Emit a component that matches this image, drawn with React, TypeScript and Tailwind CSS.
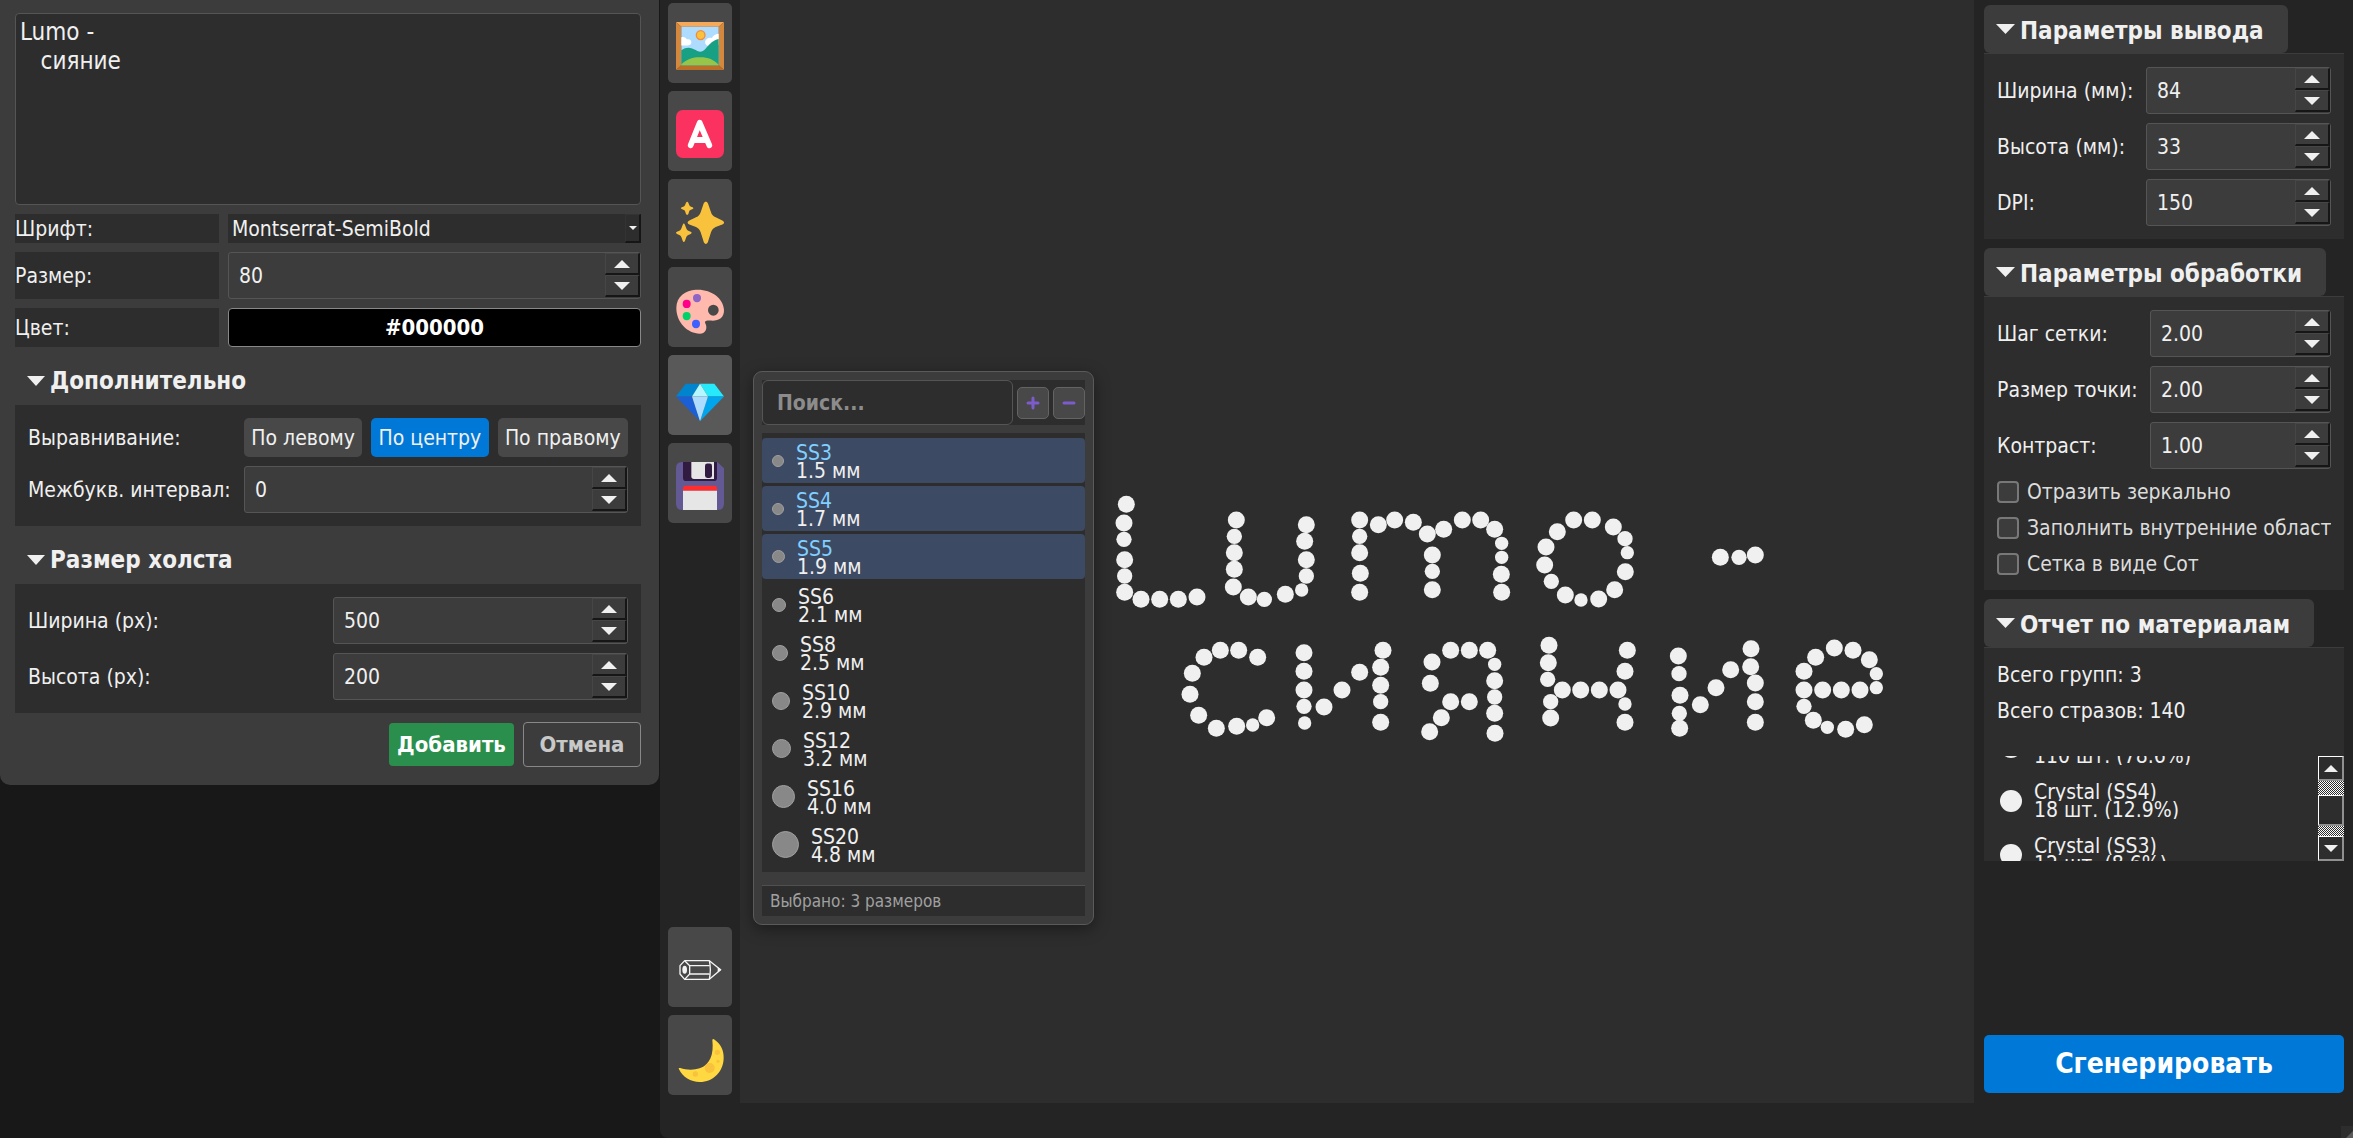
import { useState, type ReactNode } from "react";
import clsx from "clsx";

const B = 25.5;
const M = 23;
const S = 20;

/* Rhinestones of the layout: centre x, centre y, radius */
const STONES: [number, number, number][] = [
  // L
  [109, 73, B], [102, 129, B], [102, 178, M], [104, 239, B], [104, 288, M], [104, 337, B],
  [153, 358, B], [209, 358, B], [265, 358, B], [321, 351, B],
  // u
  [439, 120, B], [433, 169, M], [433, 218, B], [433, 268, B], [430, 321, B], [475, 351, B],
  [523, 358, M], [586, 343, B], [635, 330, S], [649, 288, M], [649, 239, B], [644, 184, B], [649, 134, B],
  // m
  [809, 120, B], [809, 169, M], [809, 218, B], [811, 280, B], [809, 337, B], [865, 134, B],
  [914, 120, B], [970, 127, B], [1012, 162, B], [1061, 148, B], [1117, 120, B], [1172, 120, B],
  [1214, 148, B], [1235, 190, S], [1235, 232, S], [1234, 283, B], [1235, 337, B],
  [1027, 225, B], [1027, 274, M], [1027, 329, B],
  // o
  [1451, 120, B], [1507, 120, B], [1570, 141, B], [1605, 176, M], [1612, 218, S], [1606, 275, B],
  [1574, 329, B], [1526, 357, B], [1473, 360, S], [1426, 345, B], [1384, 304, M], [1364, 255, B],
  [1368, 201, B], [1402, 155, B],
  // dash
  [1891, 232, B], [1947, 232, M], [1996, 225, B],
  // с
  [503, 532, B], [446, 511, B], [391, 511, B], [342, 532, B], [307, 580, B], [300, 643, B],
  [326, 706, B], [379, 745, B], [440, 739, B], [488, 735, S], [530, 713, B],
  // и
  [642, 518, B], [642, 574, B], [642, 630, B], [642, 679, M], [644, 729, S], [702, 681, B],
  [756, 630, B], [809, 577, B], [879, 511, B], [872, 562, B], [872, 616, B], [872, 665, M], [872, 727, B],
  // я
  [1026, 546, B], [1082, 511, B], [1138, 511, B], [1193, 511, B], [1214, 553, S], [1214, 602, B],
  [1214, 651, M], [1214, 700, B], [1215, 760, B], [1021, 610, B], [1082, 665, B], [1138, 665, B],
  [1054, 713, B], [1019, 755, B],
  // н
  [1377, 496, B], [1375, 548, B], [1373, 598, M], [1417, 630, B], [1472, 630, B], [1528, 630, B],
  [1584, 630, B], [1382, 665, M], [1382, 714, B], [1612, 511, B], [1605, 574, B], [1605, 672, S], [1605, 727, B],
  // и
  [1765, 528, B], [1767, 581, M], [1770, 646, B], [1768, 700, M], [1769, 745, B], [1831, 674, B],
  [1878, 623, B], [1922, 569, B], [1983, 506, B], [1982, 560, B], [1996, 609, B], [1996, 665, B], [1996, 727, B],
  // е
  [2142, 574, B], [2177, 532, B], [2233, 504, B], [2289, 511, B], [2338, 539, B], [2359, 581, S],
  [2359, 623, S], [2310, 630, B], [2254, 630, B], [2198, 630, B], [2142, 630, B], [2142, 679, M],
  [2170, 721, B], [2212, 742, S], [2267, 748, B], [2323, 734, B],
];

const SIZES: { name: string; mm: string; d: number; selected?: boolean }[] = [
  { name: "SS3", mm: "1.5 мм", d: 12, selected: true },
  { name: "SS4", mm: "1.7 мм", d: 12, selected: true },
  { name: "SS5", mm: "1.9 мм", d: 13, selected: true },
  { name: "SS6", mm: "2.1 мм", d: 14 },
  { name: "SS8", mm: "2.5 мм", d: 16 },
  { name: "SS10", mm: "2.9 мм", d: 18 },
  { name: "SS12", mm: "3.2 мм", d: 19 },
  { name: "SS16", mm: "4.0 мм", d: 23 },
  { name: "SS20", mm: "4.8 мм", d: 27 },
];

const REPORT = [
  { name: "Crystal (SS5)", count: "110 шт. (78.6%)" },
  { name: "Crystal (SS4)", count: "18 шт. (12.9%)" },
  { name: "Crystal (SS3)", count: "12 шт. (8.6%)" },
];

function Triangle({ up, className }: { up?: boolean; className: string }) {
  return (
    <svg viewBox="0 0 16 8" preserveAspectRatio="none" className={className} fill="#f0f0f0" aria-hidden="true">
      <path d={up ? "M0 8L8 0L16 8Z" : "M0 0L8 8L16 0Z"} />
    </svg>
  );
}

function StepButton({ up, label, onClick }: { up?: boolean; label: string; onClick: () => void }) {
  return (
    <button
      type="button"
      aria-label={label}
      onClick={onClick}
      className="flex flex-1 items-center justify-center border-t border-r-2 border-b-2 border-l border-t-[#464646] border-r-[#161616] border-b-[#161616] border-l-[#464646]"
    >
      <Triangle up={up} className="h-2 w-4" />
    </button>
  );
}

function Spin({ id, value }: { id: string; value: string }) {
  const [v, setV] = useState(value);
  const digits = value.includes(".") ? 2 : 0;
  const step = (n: number) => setV((Number(v) + n).toFixed(digits));
  return (
    <div className="flex h-[47px] min-w-0 rounded-[3px] border border-[#555] bg-[#3c3c3c]">
      <input
        id={id}
        value={v}
        onChange={(e) => setV(e.target.value)}
        className="min-w-0 flex-1 bg-transparent pl-2.5 outline-none"
      />
      <div className="flex w-[35px] shrink-0 flex-col pb-px">
        <StepButton up label="Больше" onClick={() => step(1)} />
        <StepButton label="Меньше" onClick={() => step(-1)} />
      </div>
    </div>
  );
}

function Field({ id, label, value }: { id: string; label: string; value: string }) {
  return (
    <>
      <label htmlFor={id} className="self-center whitespace-nowrap">{label}</label>
      <Spin id={id} value={value} />
    </>
  );
}

function DialogSection({ title, children }: { title: string; children: ReactNode }) {
  return (
    <section>
      <button type="button" className="flex h-[49px] items-center gap-[5px] pl-3 text-2xl font-bold">
        <Triangle className="h-2.5 w-[18px]" />
        {title}
      </button>
      <div className="bg-[#2d2d2d] p-[13px]">{children}</div>
    </section>
  );
}

function PanelSection({ title, children }: { title: string; children: ReactNode }) {
  return (
    <section>
      <button
        type="button"
        className="flex h-12 items-center gap-[5px] rounded-md bg-[#3c3c3c] pr-6 pl-3 text-2xl font-bold whitespace-nowrap"
      >
        <Triangle className="h-2.5 w-[19px]" />
        <span className="pt-[3px]">{title}</span>
      </button>
      <div className="border-t border-[#3c3c3c] bg-[#2d2d2d]">{children}</div>
    </section>
  );
}

function Check({ label }: { label: string }) {
  return (
    <label className="flex h-[27px] items-center gap-2 overflow-hidden whitespace-nowrap text-[#dcdcdc]">
      <input
        type="checkbox"
        className="size-[22px] shrink-0 appearance-none rounded-[4px] border-2 border-[#787878] bg-[#3c3c3c] checked:bg-[#0078d7]"
      />
      {label}
    </label>
  );
}

function Tool({ label, box, active, children }: {
  label: string; box: string; active?: boolean; children: ReactNode;
}) {
  return (
    <button
      type="button"
      aria-label={label}
      className={clsx(
        "flex h-20 items-center justify-center rounded-[5px] pt-1.5",
        active ? "bg-[#595959]" : "bg-[#484848]",
      )}
    >
      <svg viewBox={box} preserveAspectRatio="none" className="size-12 overflow-visible" aria-hidden="true">
        {children}
      </svg>
    </button>
  );
}

function Toolbar() {
  return (
    <nav className="flex w-20 shrink-0 flex-col gap-2 px-2 pt-[3px] pb-2">
      <Tool label="Изображение" box="78 64 144 139">
        <path d="M78 64H222L206 78H94Z" fill="#f5a95b" />
        <path d="M78 64L94 78V189L78 203Z" fill="#d3883e" />
        <path d="M222 64L206 78V189L222 203Z" fill="#d3883e" />
        <path d="M78 203L94 189H206L222 203Z" fill="#b96f27" />
        <path d="M94 78H206V189H94Z" fill="#aedcff" />
        <circle cx="152" cy="102" r="13" fill="#f9c23c" stroke="#f58a3c" strokeWidth="4" />
        <path d="M94 108C103 106 109 110 110 114C120 112 125 118 124 124C123 130 118 132 112 132H94Z" fill="#fff" />
        <path d="M206 98C195 99 188 104 186 110C175 107 166 114 165 122C165 129 170 132 176 134L206 130Z" fill="#fff" />
        <path d="M94 146C110 134 124 138 137 145C148 152 156 152 166 142C180 126 190 116 206 113V189H94Z" fill="#17a084" />
        <path d="M94 186C112 170 134 165 152 166C174 166 192 173 206 188V189H94Z" fill="#96c54a" />
      </Tool>
      <Tool label="Текст" box="78 320 144 139">
        <rect x="78" y="320" width="144" height="139" rx="20" fill="#fb315f" />
        <path d="M122 422L149 357L178 422M132 407H168" fill="none" stroke="#fff" strokeWidth="17" strokeLinecap="round" strokeLinejoin="round" />
      </Tool>
      <Tool label="Эффекты" box="78 576 144 139">
        <g fill="#f9c23c">
          <path d="M161 592C164 585 171 585 174 592L183 617C185 624 190 629 197 632L217 641C224 644 224 650 217 653L197 660C190 663 186 668 183 675L174 703C171 711 164 711 161 703L152 675C149 668 145 663 138 660L118 653C111 650 111 644 118 641L138 632C146 629 149 624 152 617Z" />
          <path d="M108 590Q112 583 115 590L118 597Q119 600 123 601L128 603Q133 606 128 608L123 610Q119 611 118 614L115 622Q112 627 108 622L105 614Q104 611 100 610L95 608Q90 606 95 603L100 601Q104 600 105 597Z" />
          <path d="M98 654Q101 646 105 654L109 664Q111 669 115 671L122 674Q128 677 122 680L115 683Q111 684 109 689L105 700Q101 707 98 700L94 689Q92 684 88 683L81 680Q75 677 81 674L88 671Q92 669 94 664Z" />
        </g>
      </Tool>
      <Tool label="Цвета" box="78 831 144 139">
        <path
          fillRule="evenodd"
          d="M137 842C182 839 220 866 222 900C223 926 203 933 180 931C168 930 162 933 167 941C172 952 169 969 149 969C114 969 79 938 79 895C79 861 107 844 137 842ZM190 885A16 16 0 1 0 190 917A16 16 0 1 0 190 885Z"
          fill="#ffb9ad"
        />
        <circle cx="141" cy="866" r="12" fill="#8d65c5" />
        <circle cx="110" cy="883" r="12" fill="#ff008a" />
        <circle cx="110" cy="918" r="12" fill="#00d26a" />
        <circle cx="138" cy="941" r="12" fill="#3f5fff" />
      </Tool>
      <Tool label="Стразы" box="78 1087 144 139" active>
        <path d="M107 1115H150L126 1152H78Z" fill="#0084ce" />
        <path d="M150 1115H193L222 1152H174Z" fill="#26eafc" />
        <path d="M150 1115L174 1152H126Z" fill="#b4f7ff" />
        <path d="M78 1152H126L150 1224Z" fill="#1b5fd6" />
        <path d="M222 1152H174L150 1224Z" fill="#00a6ed" />
        <path d="M126 1152H174L150 1224Z" fill="#aedcff" />
      </Tool>
      <Tool label="Сохранить" box="78 1342 144 139">
        <path d="M96 1342H202L222 1360V1463Q222 1481 204 1481H96Q78 1481 78 1463V1360Q78 1342 96 1342Z" fill="#635994" />
        <path d="M99 1342H201V1388Q201 1397 192 1397H108Q99 1397 99 1388Z" fill="#321b41" />
        <path d="M124 1342H192V1391H132Q124 1391 124 1383Z" fill="#e6e6e6" />
        <rect x="165" y="1346" width="21" height="42" rx="7" fill="#321b41" />
        <path d="M99 1425V1418Q99 1411 106 1411H194Q201 1411 201 1418V1425Z" fill="#ff2d2d" />
        <path d="M99 1425H201V1481H99Z" fill="#e6e6e6" />
      </Tool>
      <div className="flex-1" />
      <Tool label="Карандаш" box="78 138 144 144">
        <g fill="none" stroke="#f4f4f4" strokeWidth="4" strokeLinejoin="round">
          <path d="M104 182H178L212 209L178 238H104L90 222V197Z" />
          <path d="M104 182L119 197V222L104 238M119 197H178M119 222H178M178 182Q184 209 178 238" />
        </g>
        <ellipse cx="104" cy="209" rx="7" ry="12" fill="#f4f4f4" />
        <path d="M203 202L214 209L203 216Z" fill="#f4f4f4" />
      </Tool>
      <Tool label="Тёмная тема" box="78 402 144 144">
        <path d="M187 420C188 416 191 417 194 419C212 432 221 450 221 473C221 514 190 546 149 546C122 546 98 532 87 508C85 504 87 503 91 504C108 510 131 511 149 505C180 494 192 464 187 420Z" fill="#ffd842" />
        <g fill="#f9c23c">
          <circle cx="179" cy="504" r="15" />
          <circle cx="136" cy="522" r="8" />
          <circle cx="202" cy="457" r="8" />
          <circle cx="204" cy="484" r="5" />
        </g>
      </Tool>
    </nav>
  );
}

function TextDialog() {
  return (
    <form
      onSubmit={(e) => e.preventDefault()}
      className="flex flex-col gap-[9px] rounded-b-[10px] bg-[#3c3c3c] pt-[13px] pr-[18px] pb-[18px] pl-[15px]"
    >
      <textarea
        aria-label="Текст"
        defaultValue={"Lumo -\n   сияние"}
        className="h-48 w-full resize-none rounded-[4px] border border-[#555] bg-[#2d2d2d] p-1 text-2xl leading-[29px] outline-none"
      />
      <div className="grid grid-cols-[204px_1fr] gap-[9px]">
        <label htmlFor="font" className="flex h-[29px] items-center bg-[#2d2d2d]">Шрифт:</label>
        <div className="relative">
          <select id="font" className="h-[29px] w-full appearance-none bg-[#2d2d2d] px-1 outline-none">
            <option>Montserrat-SemiBold</option>
          </select>
          <span className="pointer-events-none absolute inset-y-0 right-0 flex w-4 items-center justify-center border-t border-r-2 border-b-2 border-l border-t-[#333] border-r-[#161616] border-b-[#161616] border-l-[#333]">
            <Triangle className="h-1 w-2" />
          </span>
        </div>
        <label htmlFor="size" className="flex items-center bg-[#2d2d2d]">Размер:</label>
        <Spin id="size" value="80" />
        <span className="flex items-center bg-[#2d2d2d]">Цвет:</span>
        <button type="button" className="h-[39px] rounded-[4px] border border-[#888] bg-black text-[22px] font-bold text-white">
          #000000
        </button>
      </div>
      <DialogSection title="Дополнительно">
        <div className="grid grid-cols-[205px_1fr] gap-x-[11px] gap-y-[9px]">
          <span className="self-center">Выравнивание:</span>
          <div className="flex h-[39px] gap-[9px] whitespace-nowrap">
            <button type="button" className="flex-auto rounded-[5px] bg-[#484848]">По левому</button>
            <button type="button" className="flex-auto rounded-[5px] bg-[#0078d7]">По центру</button>
            <button type="button" className="flex-auto rounded-[5px] bg-[#484848]">По правому</button>
          </div>
          <Field id="spacing" label="Межбукв. интервал:" value="0" />
        </div>
      </DialogSection>
      <DialogSection title="Размер холста">
        <div className="grid grid-cols-[294px_1fr] gap-x-[11px] gap-y-[9px]">
          <Field id="cw" label="Ширина (px):" value="500" />
          <Field id="ch" label="Высота (px):" value="200" />
        </div>
      </DialogSection>
      <div className="flex items-center justify-end gap-[9px] text-[22px] font-bold">
        <button type="submit" className="h-[43px] w-[125px] rounded-[4px] bg-[#2a8f4c] text-white">Добавить</button>
        <button type="button" className="h-[45px] w-[118px] rounded-[4px] border border-[#888] text-[#c8c8c8]">Отмена</button>
      </div>
    </form>
  );
}

function SizePopup() {
  return (
    <div className="absolute top-[371px] left-[13px] w-[341px] rounded-[9px] border border-[#5a5a5a] bg-[#3c3c3c] p-2 shadow-[0_4px_16px_rgba(0,0,0,0.4)]">
      <div className="flex items-center gap-1 bg-[#2d2d2d]">
        <input
          type="search"
          aria-label="Поиск"
          placeholder="Поиск..."
          className="h-[45px] min-w-0 flex-1 rounded-md border border-[#555] bg-[#2d2d2d] px-3.5 font-bold outline-none placeholder:text-[#8c8c8c]"
        />
        {["Добавить размер", "Удалить размер"].map((label, i) => (
          <button
            key={label}
            type="button"
            aria-label={label}
            className="flex size-8 items-center justify-center rounded-[5px] border border-[#646464] bg-[#484848]"
          >
            <svg viewBox="0 0 14 14" className="size-3.5" stroke="#7c5bcb" strokeWidth="3" strokeLinecap="round" aria-hidden="true">
              <path d={i === 0 ? "M2 7H12M7 2V12" : "M2 7H12"} />
            </svg>
          </button>
        ))}
      </div>
      <ul className="mt-2 flex flex-col gap-[3px] bg-[#2d2d2d] py-[5px]">
        {SIZES.map((s) => (
          <li
            key={s.name}
            className={clsx("flex h-[45px] items-center gap-3 rounded-[4px] pl-2.5", s.selected && "bg-[#3d4a63]")}
          >
            <span
              className="shrink-0 rounded-full border border-[#a0a0a0] bg-[#888]"
              style={{ width: s.d, height: s.d }}
            />
            <span className="flex flex-col pt-0.5 leading-[18px]">
              <span className={clsx("h-[18px]", s.selected && "text-[#81d0ff]")}>{s.name}</span>
              <span className="h-[18px]">{s.mm}</span>
            </span>
          </li>
        ))}
      </ul>
      <p className="mt-[13px] border-t border-[#505050] bg-[#2d2d2d] px-2 text-[17px] leading-[30px] text-[#a0a0a0]">
        Выбрано: 3 размеров
      </p>
    </div>
  );
}

function ScrollButton({ up }: { up?: boolean }) {
  return (
    <button
      type="button"
      aria-label={up ? "Прокрутить вверх" : "Прокрутить вниз"}
      className="flex h-[25px] shrink-0 items-center justify-center border border-r-2 border-b-2 border-white border-r-[#909090] border-b-[#909090] bg-[#2d2d2d]"
    >
      <Triangle up={up} className="h-[7px] w-[14px]" />
    </button>
  );
}

function ReportList() {
  return (
    <div className="flex h-[105px]">
      <ul
        ref={(el) => {
          if (el) el.scrollTop = 36;
        }}
        className="min-w-0 flex-1 overflow-hidden"
      >
        {REPORT.map((r) => (
          <li key={r.name} className="flex h-[54px] items-center gap-3 pl-4">
            <span className="size-[22px] shrink-0 rounded-full bg-[#f0f0f0]" />
            <span className="flex flex-col leading-[18px]">
              <span className="h-[18px] overflow-hidden">{r.name}</span>
              <span className="h-[18px] overflow-hidden">{r.count}</span>
            </span>
          </li>
        ))}
      </ul>
      <div className="flex w-[26px] shrink-0 flex-col bg-[repeating-conic-gradient(#ffffff_0_25%,#2d2d2d_0_50%)] bg-[length:2px_2px]">
        <ScrollButton up />
        <div className="h-[14px] shrink-0" />
        <div className="h-[31px] shrink-0 border border-r-2 border-b-2 border-white border-r-[#909090] border-b-[#909090] bg-[#2d2d2d]" />
        <div className="flex-1" />
        <ScrollButton />
      </div>
    </div>
  );
}

function SettingsPanel() {
  return (
    <aside className="flex w-[379px] shrink-0 flex-col gap-[9px] pt-[5px] pr-[9px] pb-2.5 pl-2.5">
      <PanelSection title="Параметры вывода">
        <div className="grid grid-cols-[149px_1fr] gap-y-[9px] p-[13px]">
          <Field id="w" label="Ширина (мм):" value="84" />
          <Field id="h" label="Высота (мм):" value="33" />
          <Field id="dpi" label="DPI:" value="150" />
        </div>
      </PanelSection>
      <PanelSection title="Параметры обработки">
        <div className="flex flex-col gap-[9px] p-[13px]">
          <div className="grid grid-cols-[153px_1fr] gap-y-[9px]">
            <Field id="step" label="Шаг сетки:" value="2.00" />
            <Field id="dot" label="Размер точки:" value="2.00" />
            <Field id="contrast" label="Контраст:" value="1.00" />
          </div>
          <Check label="Отразить зеркально" />
          <Check label="Заполнить внутренние област" />
          <Check label="Сетка в виде Сот" />
        </div>
      </PanelSection>
      <PanelSection title="Отчет по материалам">
        <div className="flex flex-col gap-[9px] px-[13px] pt-3.5 pb-[31px] leading-[27px]">
          <p>Всего групп: 3</p>
          <p>Всего стразов: 140</p>
        </div>
        <ReportList />
      </PanelSection>
      <button type="button" className="mt-auto h-[58px] rounded-[5px] bg-[#0078d7] text-[28px] font-bold text-white">
        Сгенерировать
      </button>
    </aside>
  );
}

export default function App() {
  return (
    <div className='flex min-h-screen bg-[#181818] font-["DejaVu_Sans_Condensed","DejaVu_Sans",sans-serif] text-[21px] leading-6 text-[#f0f0f0]'>
      <div className="w-[660px] shrink-0 pr-px">
        <TextDialog />
      </div>
      <div className="flex min-w-0 flex-1 flex-col rounded-bl-[8px] bg-[#242424]">
        <div className="flex flex-1">
          <Toolbar />
          <main className="relative min-w-0 flex-1 overflow-hidden bg-[#2d2d2d]">
            <svg
              viewBox="75 45 2310 750"
              className="absolute top-[495px] left-[375px] h-[250px] w-[770px]"
              fill="#f0f0f0"
              role="img"
              aria-label="Lumo - сияние"
            >
              {STONES.map(([x, y, r]) => (
                <circle key={`${x}-${y}`} cx={x} cy={y} r={r} />
              ))}
            </svg>
            <SizePopup />
          </main>
          <SettingsPanel />
        </div>
        <footer className="flex h-[35px] shrink-0 items-end justify-end">
          <svg viewBox="0 0 12 12" className="size-3 bg-[#2d2d2d]" aria-hidden="true">
            <path d="M5 12L12 5V12Z" fill="#5a5a5a" />
          </svg>
        </footer>
      </div>
    </div>
  );
}
